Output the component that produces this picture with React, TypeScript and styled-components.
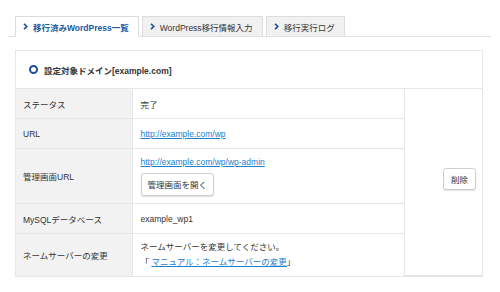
import React from "react";
import styled, { createGlobalStyle } from "styled-components";

const GlobalStyle = createGlobalStyle`
  html, body {
    margin: 0;
    padding: 0;
    background: #fff;
  }

  body {
    font-family: "Liberation Sans", "Noto Sans CJK JP", sans-serif;
    font-size: 8.5px;
    color: #333;
  }
`;

const Page = styled.div`
  width: 500px;
  padding: 16px 9px 0 8px;
  box-sizing: border-box;
`;

const TabBar = styled.div`
  display: flex;
  gap: 3px;
  padding-left: 7px;
  border-bottom: 1px solid #e0e0e0;
`;

const Tab = styled.div<{ $active?: boolean }>`
  display: flex;
  align-items: center;
  gap: 5px;
  height: 21px;
  padding: 0 9px 0 7px;
  margin-bottom: -1px;
  border: 1px solid #dcdcdc;
  border-bottom: ${p => (p.$active ? "1px solid #fff" : "1px solid #e0e0e0")};
  background: ${p => (p.$active ? "#fff" : "#f1f1f1")};
  color: ${p => (p.$active ? "#1d5aa5" : "#333")};
  font-weight: ${p => (p.$active ? 700 : 400)};
  white-space: nowrap;
  box-sizing: border-box;
`;

const Chevron = () => (
  <svg width="5" height="7" viewBox="0 0 5 7">
    <path d="M1 0.8 L3.8 3.5 L1 6.2" fill="none" stroke="#1d4f9a" strokeWidth="1.6" />
  </svg>
);

const Panel = styled.div`
  margin: 13px 0 0 7px;
  width: 468px;
  border: 1px solid #e6e6e6;
  box-sizing: border-box;
`;

const PanelHeader = styled.div`
  display: flex;
  align-items: center;
  gap: 6px;
  height: 37px;
  padding-left: 13px;
  font-weight: 700;
  color: #333;
`;

const Ring = styled.span`
  width: 5px;
  height: 5px;
  border: 2px solid #1d4f9a;
  border-radius: 50%;
`;

const Table = styled.table`
  width: 100%;
  border-collapse: collapse;
  table-layout: fixed;

  td {
    border: 1px solid #e6e6e6;
    padding: 0;
    vertical-align: middle;
  }

  tr:last-child td {
    border-bottom: none;
  }

  td:first-child {
    border-left: none;
  }

  td:last-child {
    border-right: none;
  }
`;

const Row = styled.tr<{ $h: number }>`
  height: ${p => p.$h}px;
`;

const Label = styled.td`
  width: 116px;
  background: #f2f2f2;
  padding-left: 7px !important;
  box-sizing: border-box;
`;

const Value = styled.td`
  padding-left: 8px !important;
`;

const ActionCell = styled.td`
  width: 71px;
  text-align: right;
  padding: 0 6px 7px 0 !important;
`;

const Link = styled.a`
  color: #1b80d2;
  text-decoration: underline;
`;

const Stack = styled.div`
  display: flex;
  flex-direction: column;
  align-items: flex-start;
  gap: 6px;
`;

const Lines = styled.div`
  line-height: 15px;
`;

const Button = styled.button<{ $small?: boolean }>`
  font-family: inherit;
  font-size: 8.5px;
  color: #333;
  background: #fff;
  border: 1px solid #cfcfcf;
  border-radius: 3px;
  box-shadow: 0 1px 1px rgba(0, 0, 0, 0.12);
  height: ${p => (p.$small ? 22 : 23)}px;
  padding: 0 ${p => (p.$small ? 7 : 6)}px;
  cursor: pointer;
`;

export default function App() {
  return (
    <>
      <GlobalStyle />
      <Page>
        <TabBar>
          <Tab $active>
            <Chevron />
            移行済みWordPress一覧
          </Tab>
          <Tab>
            <Chevron />
            WordPress移行情報入力
          </Tab>
          <Tab>
            <Chevron />
            移行実行ログ
          </Tab>
        </TabBar>

        <Panel>
          <PanelHeader>
            <Ring />
            設定対象ドメイン[example.com]
          </PanelHeader>
          <Table>
            <tbody>
              <Row $h={30}>
                <Label>ステータス</Label>
                <Value>完了</Value>
                <ActionCell rowSpan={5}>
                  <Button $small>削除</Button>
                </ActionCell>
              </Row>
              <Row $h={30}>
                <Label>URL</Label>
                <Value>
                  <Link href="#">http://example.com/wp</Link>
                </Value>
              </Row>
              <Row $h={55}>
                <Label>管理画面URL</Label>
                <Value>
                  <Stack>
                    <Link href="#">http://example.com/wp/wp-admin</Link>
                    <Button>管理画面を開く</Button>
                  </Stack>
                </Value>
              </Row>
              <Row $h={30}>
                <Label>MySQLデータベース</Label>
                <Value>example_wp1</Value>
              </Row>
              <Row $h={42}>
                <Label>ネームサーバーの変更</Label>
                <Value>
                  <Lines>
                    ネームサーバーを変更してください。
                    <br />
                    「 <Link href="#">マニュアル：ネームサーバーの変更</Link>」
                  </Lines>
                </Value>
              </Row>
            </tbody>
          </Table>
        </Panel>
      </Page>
    </>
  );
}
